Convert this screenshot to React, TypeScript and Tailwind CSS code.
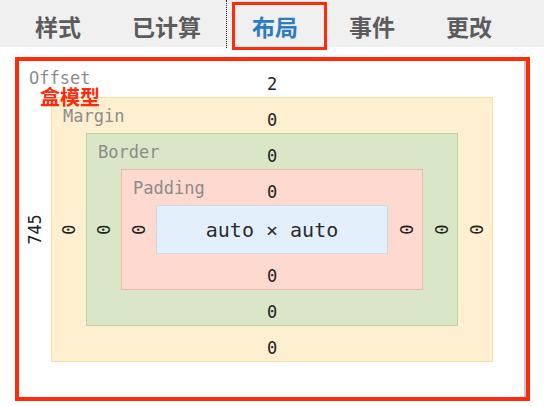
const mono = { fontFamily: '"DejaVu Sans Mono", "Liberation Mono", monospace' };
const cjk = { fontFamily: '"Noto Sans CJK SC", "Noto Sans", sans-serif' };

function Side({ value, dir }: { value: string; dir: 'left' | 'right' }) {
  return (
    <div className="w-[34px] flex items-center justify-center self-stretch">
      <span
        className={`text-[17px] leading-none text-[#222] ${dir === 'left' ? '-rotate-90' : 'rotate-90'}`}
        style={mono}
      >
        {value}
      </span>
    </div>
  );
}

function Layer({
  label,
  className,
  children,
}: {
  label: string;
  className: string;
  children: React.ReactNode;
}) {
  return (
    <div className={`flex flex-col border ${className}`}>
      <div className="grid grid-cols-[1fr_auto_1fr] h-[35px] items-start" style={mono}>
        <span className="pl-[11px] pt-[8px] text-[17px] leading-[20px] text-[#8c8c8c]">{label}</span>
        <span className="pt-[12px] text-[17px] leading-[20px] text-[#222]">0</span>
        <span />
      </div>
      <div className="flex items-center">
        <Side value="0" dir="left" />
        {children}
        <Side value="0" dir="right" />
      </div>
      <div className="h-[35px] flex justify-center" style={mono}>
        <span className="pt-[12px] text-[17px] leading-[20px] text-[#222]">0</span>
      </div>
    </div>
  );
}

export default function App() {
  const tabs = ['样式', '已计算', '布局', '事件', '更改'];

  return (
    <div className="w-[544px] h-[406px] bg-white overflow-hidden relative">
      {/* tab strip */}
      <div className="h-[47px] bg-[#f0f0f0] flex items-center pl-[35px] gap-[51px] pt-[5px]" style={cjk}>
        {tabs.map((t) => (
          <span
            key={t}
            className={`text-[23px] leading-none font-bold ${t === '布局' ? 'text-[#2d7cc2]' : 'text-[#5c5c5c]'}`}
          >
            {t}
          </span>
        ))}
      </div>
      <div className="absolute left-[226px] top-0 h-[48px] border-l border-dotted border-[#222]" />
      <div className="absolute left-[232px] top-[2px] w-[95px] h-[48px] border-[3px] border-[#ff2a0a]" />

      {/* box model */}
      <div className="relative mt-[10px] ml-[15px] w-[515px] h-[344px] border-4 border-[#ff2a0a]">
        <div className="h-full flex flex-col border-r-2 border-[#c8c8c8]">
          <div className="h-[36px] flex items-start" style={mono}>
            <span className="w-[32px] pl-[10px] pt-[7px] text-[17px] leading-[20px] text-[#8c8c8c] whitespace-nowrap">
              Offset
            </span>
            <span className="w-[442px] text-center pt-[13px] text-[17px] leading-[20px] text-[#222]">2</span>
          </div>
          <div className="flex items-center">
            <div className="w-[32px] flex justify-center">
              <span className="-rotate-90 text-[17px] leading-none text-[#222]" style={mono}>
                745
              </span>
            </div>
            <Layer label="Margin" className="bg-[#fdefcf] border-[#f6e0a6]">
              <Layer label="Border" className="bg-[#d9e7c6] border-[#b9d49c]">
                <Layer label="Padding" className="bg-[#fdd9cf] border-[#f1b9a9]">
                  <div
                    className="w-[232px] h-[49px] bg-[#e3f0fc] border border-[#c6dbee] flex items-center justify-center text-[20px] text-[#2b2b2b]"
                    style={mono}
                  >
                    auto × auto
                  </div>
                </Layer>
              </Layer>
            </Layer>
          </div>
        </div>
        <span
          className="absolute left-[21px] top-[26px] text-[20px] leading-none font-bold text-[#ff2a0a]"
          style={cjk}
        >
          盒模型
        </span>
      </div>
    </div>
  );
}
